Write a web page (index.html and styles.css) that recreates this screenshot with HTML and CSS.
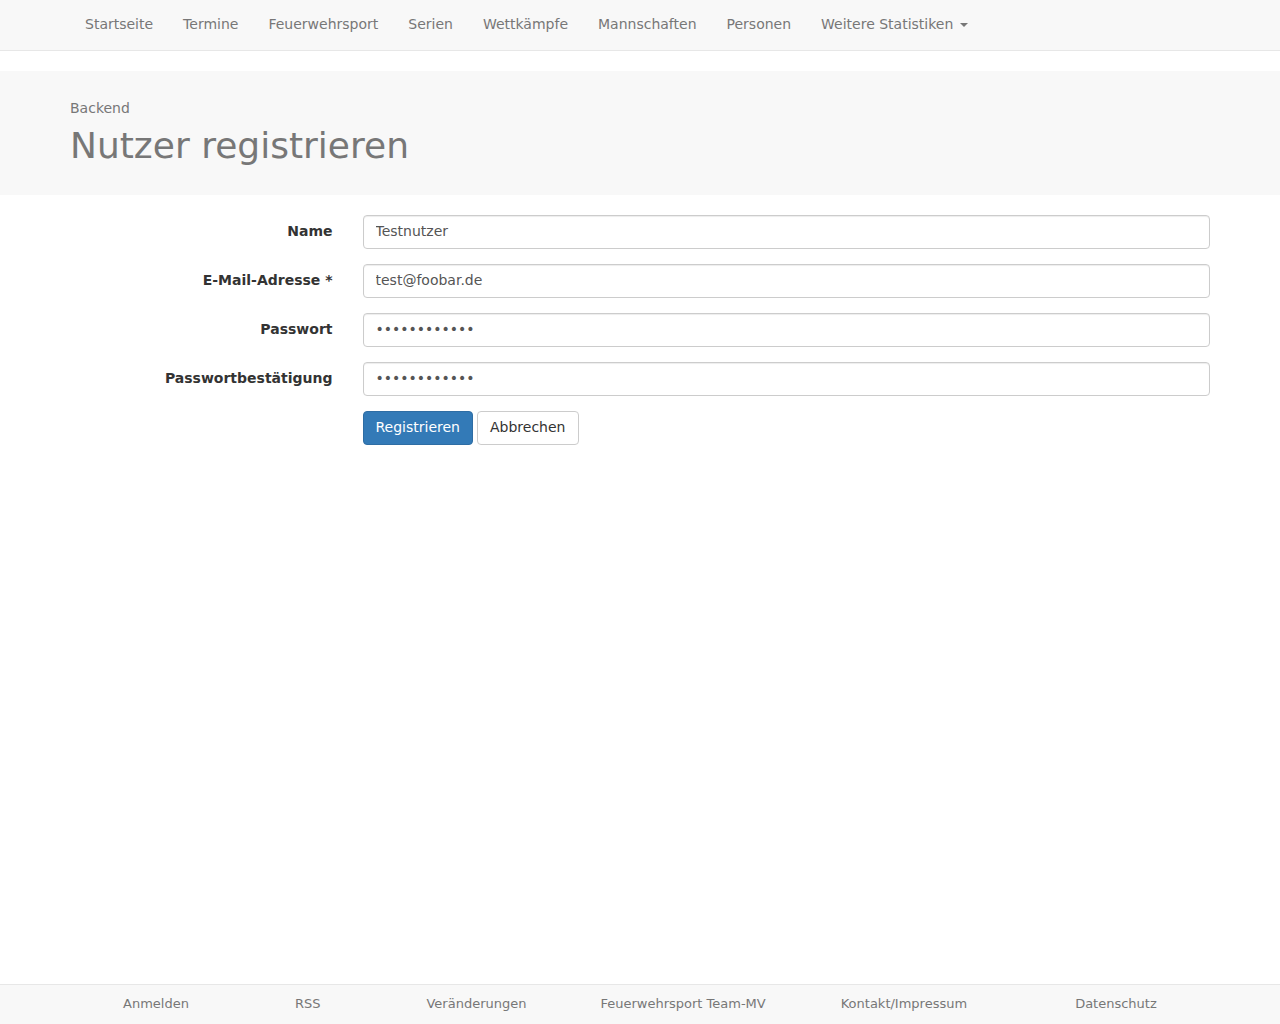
FILE: index.html
```html
<!DOCTYPE html>
<html lang="de">
<head>
<meta charset="utf-8">
<title>Nutzer registrieren</title>
<link rel="stylesheet" href="styles.css">
</head>
<body>
<div class="page">
  <nav class="navbar">
    <div class="container">
      <ul class="nav">
        <li><a href="#">Startseite</a></li>
        <li><a href="#">Termine</a></li>
        <li><a href="#">Feuerwehrsport</a></li>
        <li><a href="#">Serien</a></li>
        <li><a href="#">Wettkämpfe</a></li>
        <li><a href="#">Mannschaften</a></li>
        <li><a href="#">Personen</a></li>
        <li><a href="#">Weitere Statistiken <span class="caret"></span></a></li>
      </ul>
    </div>
  </nav>

  <header class="page-head">
    <div class="container">
      <div class="crumb">Backend</div>
      <h1 class="title">Nutzer registrieren</h1>
    </div>
  </header>

  <main class="container">
    <form class="form">
      <div class="form-group">
        <label class="label" for="name">Name</label>
        <div class="field"><input class="input" id="name" type="text" value="Testnutzer"></div>
      </div>
      <div class="form-group">
        <label class="label" for="email">E-Mail-Adresse *</label>
        <div class="field"><input class="input" id="email" type="email" value="test@foobar.de"></div>
      </div>
      <div class="form-group">
        <label class="label" for="pw">Passwort</label>
        <div class="field"><input class="input" id="pw" type="password" value="testpasswort"></div>
      </div>
      <div class="form-group">
        <label class="label" for="pw2">Passwortbestätigung</label>
        <div class="field"><input class="input" id="pw2" type="password" value="testpasswort"></div>
      </div>
      <div class="form-group">
        <div class="label"></div>
        <div class="field buttons">
          <button type="button" class="btn btn-primary">Registrieren</button>
          <button type="button" class="btn btn-default">Abbrechen</button>
        </div>
      </div>
    </form>
  </main>

  <footer class="footer">
    <ul class="footer-links">
      <li><a href="#">Anmelden</a></li>
      <li><a href="#">RSS</a></li>
      <li><a href="#">Veränderungen</a></li>
      <li><a href="#">Feuerwehrsport Team-MV</a></li>
      <li><a href="#">Kontakt/Impressum</a></li>
      <li><a href="#">Datenschutz</a></li>
    </ul>
  </footer>
</div>
</body>
</html>
```

FILE: styles.css
```css
* { box-sizing: border-box; }
html, body { margin: 0; padding: 0; }
body {
  font-family: "DejaVu Sans", "Liberation Sans", sans-serif;
  font-size: 14px;
  line-height: 20px;
  color: #333;
  background: #fff;
}
a { text-decoration: none; }
.page {
  min-height: 100vh;
  display: flex;
  flex-direction: column;
}
.container {
  width: 1170px;
  margin: 0 auto;
  padding: 0 15px;
}
.navbar {
  background: #f8f8f8;
  border-bottom: 1px solid #e7e7e7;
  height: 51px;
}
.nav {
  list-style: none;
  margin: 0;
  padding: 0;
  display: flex;
}
.nav a {
  display: block;
  padding: 14px 15px 16px;
  color: #777;
  line-height: 20px;
}
.caret {
  display: inline-block;
  width: 0;
  height: 0;
  margin-left: 2px;
  vertical-align: middle;
  border-top: 4px solid #777;
  border-left: 4px solid transparent;
  border-right: 4px solid transparent;
}
.page-head {
  margin-top: 20px;
  background: #f8f8f8;
  padding: 27px 0 29px;
}
.crumb {
  color: #777;
  line-height: 20px;
}
.title {
  margin: 8px 0 0;
  font-size: 36px;
  line-height: 40px;
  font-weight: 400;
  color: #777;
}
.form {
  margin: 20px -15px 0;
}
.form-group {
  display: grid;
  grid-template-columns: 25% 75%;
  margin-bottom: 15px;
}
.label {
  padding: 6px 15px 0;
  text-align: right;
  font-weight: 700;
  color: #333;
}
.field {
  padding: 0 15px;
}
.input {
  display: block;
  width: 100%;
  height: 34px;
  padding: 5px 12px 7px;
  font-family: inherit;
  font-size: 14px;
  line-height: 20px;
  color: #555;
  background: #fff;
  border: 1px solid #ccc;
  border-radius: 4px;
  box-shadow: inset 0 1px 1px rgba(0,0,0,.075);
  margin: 0;
}
.buttons {
  display: flex;
  gap: 4px;
}
.btn {
  font-family: inherit;
  font-size: 14px;
  line-height: 20px;
  padding: 5px 12px 7px;
  border-radius: 4px;
  border: 1px solid transparent;
  height: 34px;
  margin: 0;
  cursor: pointer;
}
.btn-primary {
  background: #337ab7;
  border-color: #2e6da4;
  color: #fff;
}
.btn-default {
  background: #fff;
  border-color: #ccc;
  color: #333;
  padding-right: 13px;
}
.footer {
  margin-top: auto;
  background: #f8f8f8;
  border-top: 1px solid #e7e7e7;
  height: 40px;
}
.footer-links {
  list-style: none;
  margin: 0;
  padding: 0 0 0 123px;
  display: flex;
  font-size: 13px;
  line-height: 37px;
}
.footer-links li + li { margin-left: 106px; }
.footer-links li:nth-child(4) { margin-left: 74px; }
.footer-links li:nth-child(5) { margin-left: 75px; }
.footer-links li:nth-child(6) { margin-left: 108px; }
.footer-links a { color: #777; }
```
